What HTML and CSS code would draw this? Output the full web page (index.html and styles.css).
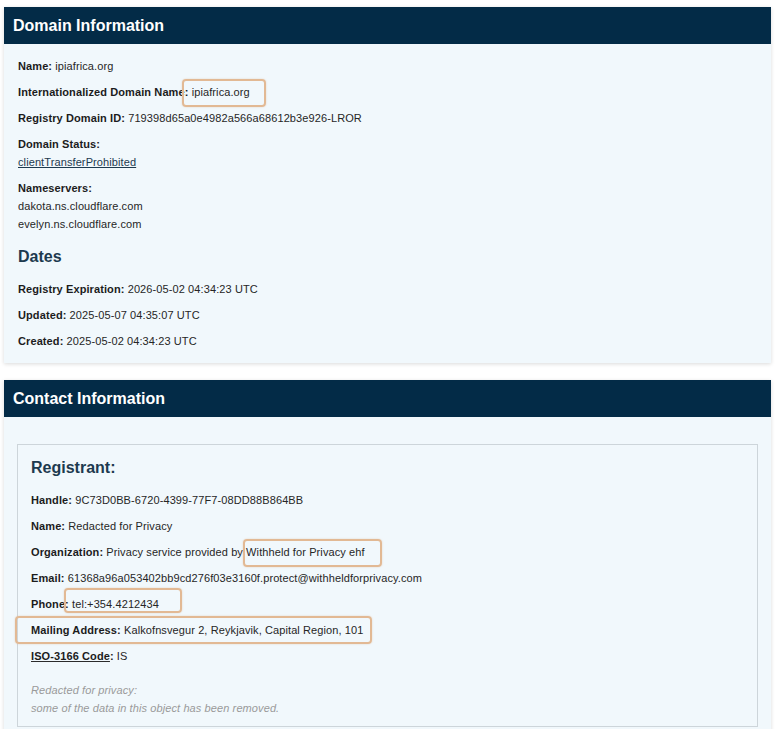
FILE: index.html
```html
<!DOCTYPE html>
<html lang="en">
<head>
    <meta charset="UTF-8">
    <meta name="viewport" content="width=device-width, initial-scale=1.0">
    <title>ipiafrica.org - RDAP Lookup</title>
    <link rel="stylesheet" href="styles.css">
</head>
<body>
    <section class="card">
        <h1 class="card-title">Domain Information</h1>
        <div class="card-body">
            <p><b>Name:</b> ipiafrica.org</p>
            <p class="marked"><b>Internationalized Domain Name:</b> ipiafrica.org<span class="mark mark-idn"></span></p>
            <p><b>Registry Domain ID:</b> 719398d65a0e4982a566a68612b3e926-LROR</p>
            <div class="field">
                <b>Domain Status:</b>
                <a href="#">clientTransferProhibited</a>
            </div>
            <div class="field">
                <b>Nameservers:</b>
                <span>dakota.ns.cloudflare.com</span>
                <span>evelyn.ns.cloudflare.com</span>
            </div>

            <h2>Dates</h2>
            <p><b>Registry Expiration:</b> 2026-05-02 04:34:23 UTC</p>
            <p><b>Updated:</b> 2025-05-07 04:35:07 UTC</p>
            <p><b>Created:</b> 2025-05-02 04:34:23 UTC</p>
        </div>
    </section>

    <section class="card">
        <h1 class="card-title">Contact Information</h1>
        <div class="card-body contacts">
            <div class="contact">
                <h3>Registrant:</h3>
                <p><b>Handle:</b> 9C73D0BB-6720-4399-77F7-08DD88B864BB</p>
                <p><b>Name:</b> Redacted for Privacy</p>
                <p class="marked"><b>Organization:</b> Privacy service provided by Withheld for Privacy ehf<span class="mark mark-org"></span></p>
                <p><b>Email:</b> 61368a96a053402bb9cd276f03e3160f.protect@withheldforprivacy.com</p>
                <p class="marked"><b>Phone:</b> tel:+354.4212434<span class="mark mark-phone"></span></p>
                <p class="marked"><b>Mailing Address:</b> Kalkofnsvegur 2, Reykjavik, Capital Region, 101<span class="mark mark-address"></span></p>
                <p><b><abbr title="ISO 3166-1 alpha-2 country code">ISO-3166 Code</abbr>:</b> IS</p>
                <div class="redacted">
                    <span>Redacted for privacy:</span>
                    <span>some of the data in this object has been removed.</span>
                </div>
            </div>
        </div>
    </section>
</body>
</html>
```

FILE: styles.css
```css
* {
    margin: 0;
    padding: 0;
    box-sizing: border-box;
}

body {
    font-family: "Liberation Sans", Arial, sans-serif;
    font-size: 11px;
    line-height: 18px;
    letter-spacing: 0.1px;
    color: #262626;
    background-color: #ffffff;
    padding: 7px 5px 0 4px;
}

.card {
    background-color: #f1f8fc;
    box-shadow: 0 1px 4px rgba(0, 0, 0, 0.15);
    margin-bottom: 17px;
}

.card-title {
    background-color: #032b47;
    color: #ffffff;
    font-size: 16px;
    line-height: 37px;
    height: 37px;
    padding-left: 9px;
    letter-spacing: 0;
}

.card-body {
    padding: 13px 14px;
}

.card-body p,
.field {
    margin-bottom: 8px;
}

.card-body > p:last-child {
    margin-bottom: 0;
}

b {
    color: #1c1c1c;
}

.field {
    display: flex;
    flex-direction: column;
}

.field a {
    color: #1d3a4f;
    text-decoration: underline;
    align-self: flex-start;
}

h2,
h3 {
    font-size: 16px;
    line-height: 20px;
    color: #1d3a4f;
    letter-spacing: 0;
}

h2 {
    margin: 14px 0 13px;
}

h3 {
    margin-bottom: 13px;
}

.contacts {
    padding: 27px 13px 13px;
}

.contact {
    border: 1px solid #cdd5da;
    padding: 13px 13px 9px;
}

abbr {
    text-decoration: underline;
    text-decoration-color: #2b2b2b;
}

.redacted {
    display: flex;
    flex-direction: column;
    margin-top: 16px;
    font-style: italic;
    color: #9a9a9a;
}

/* annotation boxes drawn over the values */
.marked {
    position: relative;
}

.mark {
    position: absolute;
    border: 2px solid #e2b994;
    border-radius: 4px;
    box-shadow: 0 0 2px rgba(214, 160, 110, 0.4);
}

.mark-idn {
    left: 164px;
    top: -4px;
    width: 84px;
    height: 28px;
}

.mark-org {
    left: 212px;
    top: -4px;
    width: 139px;
    height: 28px;
}

.mark-phone {
    left: 33px;
    top: -7px;
    width: 118px;
    height: 25px;
}

.mark-address {
    left: -16px;
    top: -5px;
    width: 357px;
    height: 28px;
}
```
